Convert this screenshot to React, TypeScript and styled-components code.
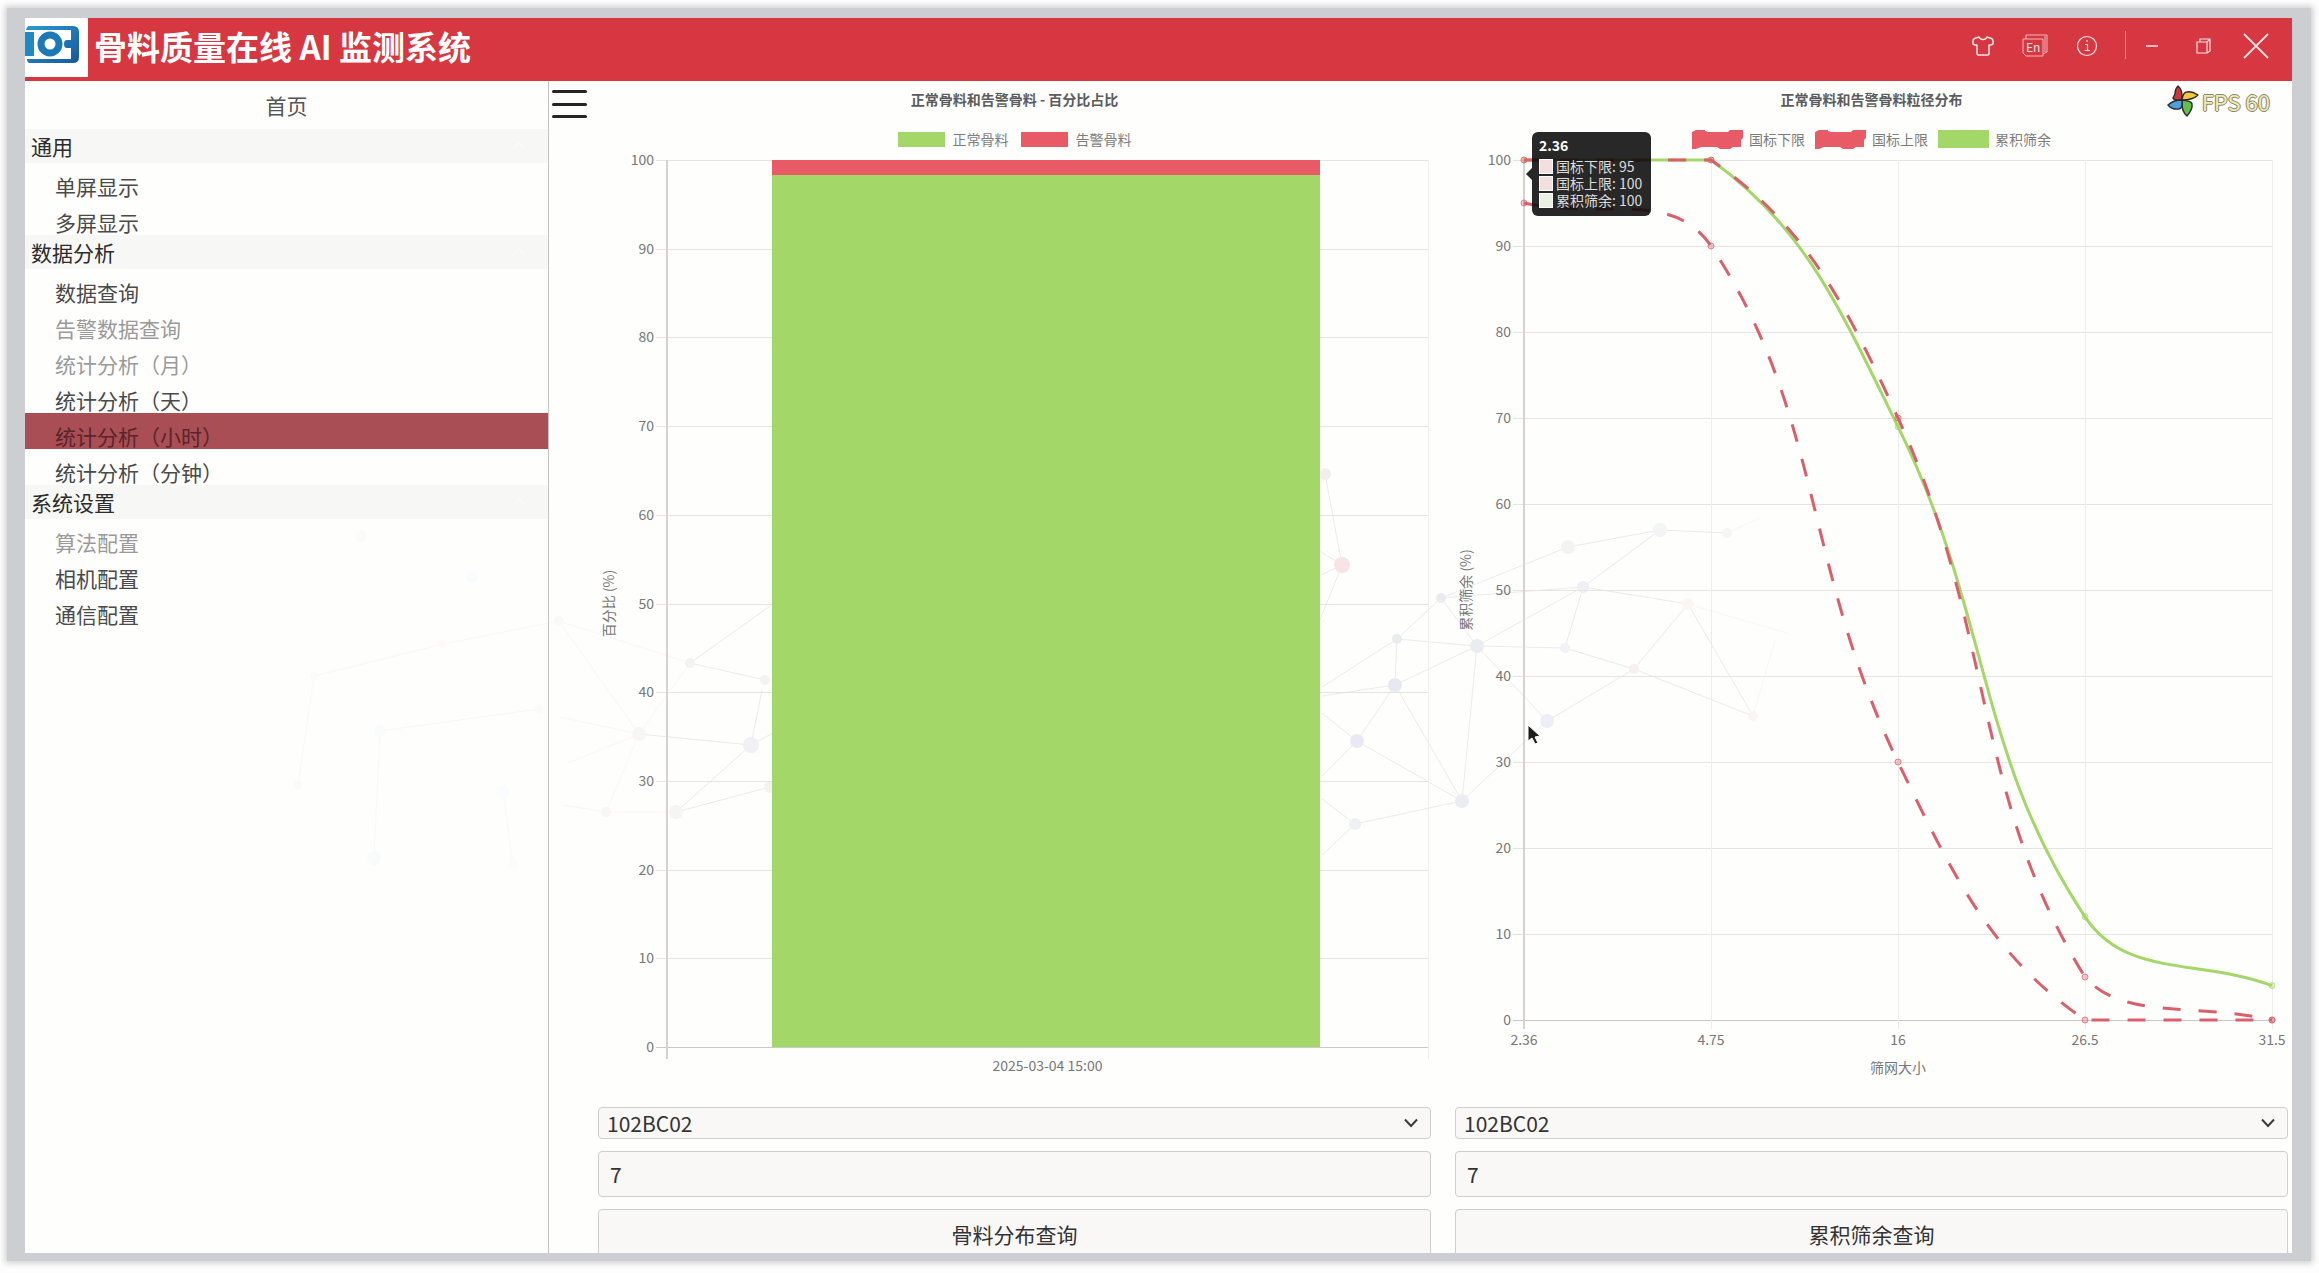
import React, { useLayoutEffect, useRef, useState } from "react";
import styled, { createGlobalStyle, css } from "styled-components";

const GlobalStyle = createGlobalStyle`
  *, *::before, *::after { box-sizing: border-box; }
  body {
    margin: 0;
    background: #fdfdfd;
    color: #333;
    font-family: "Noto Sans CJK SC", "Noto Sans", sans-serif;
  }
  button, input, select { font: inherit; color: inherit; }
`;

const RED = "#e85a66";
const GREEN = "#a3d768";

/* ---------- window frame ---------- */

const Page = styled.div`
  height: 100vh;
  padding: 8px 8px 12px 7px;
  overflow: hidden;
`;

const Bezel = styled.div`
  height: 100%;
  padding: 10px 19px 8px 18px;
  background: #cdced1;
  box-shadow: 0 0 6px 2px #cdced1;
`;

const AppWindow = styled.div`
  position: relative;
  display: flex;
  flex-direction: column;
  height: 100%;
  overflow: hidden;
  background: #fefefd;
`;

/* ---------- header ---------- */

const Header = styled.header`
  display: flex;
  align-items: center;
  flex: none;
  height: 63px;
  padding-right: 10px;
  background: #d63741;
  color: #fff;
`;

const LogoBox = styled.div`
  align-self: flex-start;
  width: 63px;
  height: 59px;
  background: #fff;
`;

const AppTitle = styled.h1`
  flex: 1;
  margin: 0;
  padding: 0 0 8px 6px;
  font-size: 33px;
  line-height: 40px;
  font-weight: 700;
`;

const WindowButtons = styled.div`
  display: flex;
  height: 63px;
  padding-bottom: 8px;
`;

const IconButton = styled.button`
  display: grid;
  place-items: center;
  width: 52px;
  padding: 0;
  border: 0;
  background: none;
  color: #fbe3e4;
`;

const Divider = styled.span`
  width: 1px;
  height: 28px;
  margin: 13px 0 0 12px;
  background: #eb9095;
`;

/* ---------- body ---------- */

const Body = styled.div`
  position: relative;
  display: flex;
  flex: 1;
  min-height: 0;
`;

const Backdrop = styled.svg`
  position: absolute;
  inset: 0;
  width: 100%;
  height: 100%;
  pointer-events: none;
`;

const Sidebar = styled.nav`
  position: relative;
  flex: none;
  width: 524px;
  border-right: 1px solid #c4c3c2;
  font-size: 21px;
`;

const HomeLink = styled.a`
  display: block;
  height: 48px;
  line-height: 48px;
  text-align: center;
  color: #555;
  text-decoration: none;
`;

const SectionButton = styled.button`
  display: flex;
  align-items: center;
  justify-content: space-between;
  width: 100%;
  height: 34px;
  padding: 0 22px 0 6px;
  border: 0;
  background: #f7f7f5;
  color: #2b2b2b;
`;

const MenuList = styled.ul`
  margin: 0;
  padding: 0;
  list-style: none;
`;

const MenuLink = styled.a<{ $state?: "off" | "active" }>`
  display: block;
  height: 36px;
  padding: 7px 0 0 30px;
  line-height: 32px;
  color: #4a4a4a;
  text-decoration: none;
  ${(p) => p.$state === "off" && css`color: #9a9a9a;`}
  ${(p) => p.$state === "active" && css`background: #a94e55; color: #5a2429;`}
`;

const ToggleColumn = styled.div`
  position: relative;
  flex: none;
  width: 49px;
  padding: 7px 0 0 2px;
`;

const MenuToggle = styled.button`
  display: grid;
  align-content: space-between;
  width: 36px;
  height: 30px;
  padding: 2px 0 0 1px;
  border: 0;
  background: none;
`;

const ToggleBar = styled.span`
  height: 3px;
  border-radius: 2px;
  background: #252525;
`;

const Columns = styled.main`
  position: relative;
  flex: 1;
  display: grid;
  grid-template-columns: repeat(2, minmax(0, 1fr));
  gap: 24px;
  min-width: 0;
  padding-right: 4px;
`;

const Column = styled.section`
  display: flex;
  flex-direction: column;
  gap: 12px;
  min-height: 0;
  margin-bottom: -5px;
`;

/* ---------- chart ---------- */

const Figure = styled.figure`
  position: relative;
  display: flex;
  flex-direction: column;
  flex: 1;
  min-height: 0;
  margin: 0;
  font-size: 14px;
`;

const ChartTitle = styled.figcaption`
  line-height: 36px;
  text-align: center;
  font-weight: 700;
  color: #5c5c5c;
`;

const Legend = styled.ul<{ $gap: number }>`
  display: flex;
  justify-content: center;
  gap: ${(p) => p.$gap}px;
  height: 24px;
  margin: 10px 0 1px;
  padding: 0;
  list-style: none;
  color: #7d7d7d;
`;

const LegendItem = styled.li<{ $gap: number }>`
  display: flex;
  align-items: center;
  gap: ${(p) => p.$gap}px;
  line-height: 22px;
`;

const Swatch = styled.span<{ $color: string; $wide?: boolean }>`
  width: ${(p) => (p.$wide ? 51 : 47)}px;
  height: ${(p) => (p.$wide ? 18 : 15)}px;
  background: ${(p) => p.$color};
`;

const PlotArea = styled.div`
  position: relative;
  flex: 1;
  min-height: 0;
`;

const PlotSvg = styled.svg`
  position: absolute;
  inset: 0;
  overflow: visible;
  font-size: 14px;
  fill: #777;
`;

const Tooltip = styled.div`
  position: absolute;
  top: -20px;
  left: 77px;
  width: 119px;
  height: 84px;
  padding: 3px 7px;
  border-radius: 6px;
  background: rgba(10, 10, 10, 0.88);
  color: #dcdcdc;
  &::before {
    content: "";
    position: absolute;
    left: -6px;
    top: 36px;
    border: solid transparent;
    border-width: 6px 6px 6px 0;
    border-right-color: rgba(10, 10, 10, 0.88);
  }
`;

const TooltipTitle = styled.strong`
  display: block;
  height: 23px;
  line-height: 20px;
  color: #fff;
`;

const TooltipRow = styled.div`
  display: flex;
  align-items: center;
  gap: 3px;
  height: 17px;
  line-height: 17px;
  white-space: nowrap;
`;

const TooltipSwatch = styled.span<{ $tint: string }>`
  width: 14px;
  height: 15px;
  border: 1px solid #fff;
  background: ${(p) => p.$tint};
`;

/* ---------- form ---------- */

const Controls = styled.form`
  display: grid;
  gap: 12px;
  flex: none;
  font-size: 21px;
  color: #333;
`;

const box = css`
  width: 100%;
  border: 1px solid #cfcfca;
  border-radius: 4px;
  background: #f9f8f6;
`;

const SelectWrap = styled.div`
  position: relative;
  height: 32px;
`;

const CameraSelect = styled.select`
  ${box}
  appearance: none;
  height: 32px;
  padding: 0 40px 0 8px;
  line-height: 30px;
`;

const SelectArrow = styled.svg`
  position: absolute;
  right: 13px;
  top: 11px;
  pointer-events: none;
`;

const NumberBox = styled.input`
  ${box}
  height: 46px;
  padding: 0 11px;
`;

const QueryButton = styled.button`
  ${box}
  height: 49px;
  padding: 0;
`;

/* ---------- overlays ---------- */

const Fps = styled.div`
  position: absolute;
  top: 4px;
  right: 22px;
  display: flex;
  align-items: center;
  gap: 3px;
`;

const FpsText = styled.span`
  font-size: 22px;
  line-height: 32px;
  color: #efe8ba;
  text-shadow: 1px 0 #8b8762, -1px 0 #8b8762, 0 1px #8b8762, 0 -1px #8b8762;
`;

const Pointer = styled.svg`
  position: absolute;
  left: 1502px;
  top: 706px;
`;

/* ---------- helpers ---------- */

function useSize() {
  const ref = useRef<HTMLDivElement>(null);
  const [size, setSize] = useState({ w: 0, h: 0 });
  useLayoutEffect(() => {
    const el = ref.current;
    if (!el) return;
    const read = () => setSize({ w: el.clientWidth, h: el.clientHeight });
    read();
    const observer = new ResizeObserver(read);
    observer.observe(el);
    return () => observer.disconnect();
  }, []);
  return { ref, ...size };
}

type Pt = { x: number; y: number };

/* Cardinal spline whose control points are kept inside the plot. */
function splinePath(pts: Pt[], tension: number, top: number, bottom: number) {
  const clamp = (v: number) => Math.max(top, Math.min(bottom, v));
  const ctrl = pts.map((p, i) => {
    const prev = pts[Math.max(0, i - 1)];
    const next = pts[Math.min(pts.length - 1, i + 1)];
    const d01 = Math.hypot(p.x - prev.x, p.y - prev.y);
    const d12 = Math.hypot(next.x - p.x, next.y - p.y);
    const sum = d01 + d12 || 1;
    const fa = (tension * d01) / sum;
    const fb = (tension * d12) / sum;
    return {
      before: { x: p.x - fa * (next.x - prev.x), y: clamp(p.y - fa * (next.y - prev.y)) },
      after: { x: p.x + fb * (next.x - prev.x), y: clamp(p.y + fb * (next.y - prev.y)) },
    };
  });
  return pts
    .map((p, i) => {
      if (i === 0) return `M${p.x} ${p.y}`;
      const a = ctrl[i - 1].after;
      const b = ctrl[i].before;
      return `C${a.x} ${a.y} ${b.x} ${b.y} ${p.x} ${p.y}`;
    })
    .join("");
}

const TICKS = [0, 10, 20, 30, 40, 50, 60, 70, 80, 90, 100];
const PLOT_TOP = 8;
const PLOT_LEFT = 69;

type AxesProps = { right: number; bottom: number; title: string; tail: number; columns: number };

function Axes({ right, bottom, title, tail, columns }: AxesProps) {
  const y = (v: number) => Math.round(bottom - ((bottom - PLOT_TOP) * v) / 100) + 0.5;
  const mid = (PLOT_TOP + bottom) / 2;
  return (
    <g>
      {TICKS.map((t) => (
        <g key={t}>
          <line x1={PLOT_LEFT - 11} x2={right} y1={y(t)} y2={y(t)} stroke={t ? "#e6e4e0" : "#cbc9c6"} />
          <text x={PLOT_LEFT - 13} y={y(t) + 4} textAnchor="end">{t}</text>
        </g>
      ))}
      {Array.from({ length: columns }, (_, i) => {
        const x = Math.round(PLOT_LEFT + ((right - PLOT_LEFT) * (i + 1)) / columns) + 0.5;
        return <line key={i} x1={x} x2={x} y1={PLOT_TOP} y2={bottom + tail} stroke="#eeedeb" />;
      })}
      <line x1={PLOT_LEFT} x2={PLOT_LEFT} y1={PLOT_TOP} y2={bottom + tail} stroke="#d6d2ce" strokeWidth="2" />
      <text transform={`translate(16 ${mid}) rotate(-90)`} textAnchor="middle">{title}</text>
    </g>
  );
}

function BarChart() {
  const { ref, w, h } = useSize();
  const right = w - 3;
  const bottom = h - 48;
  const span = right - PLOT_LEFT;
  const full = bottom - PLOT_TOP;
  const barX = PLOT_LEFT + Math.floor(span * 0.139);
  const barW = Math.round(span * 0.72);
  const warn = Math.round(full * 0.017);
  return (
    <Figure>
      <ChartTitle>正常骨料和告警骨料 - 百分比占比</ChartTitle>
      <Legend $gap={12}>
        <LegendItem $gap={8}><Swatch $color={GREEN} />正常骨料</LegendItem>
        <LegendItem $gap={8}><Swatch $color={RED} />告警骨料</LegendItem>
      </Legend>
      <PlotArea ref={ref}>
        {w > 0 && (
          <PlotSvg width={w} height={h}>
            <Axes right={right} bottom={bottom} title="百分比 (%)" tail={12} columns={1} />
            <rect x={barX} y={PLOT_TOP} width={barW} height={warn} fill={RED} />
            <rect x={barX} y={PLOT_TOP + warn} width={barW} height={full - warn} fill={GREEN} />
            <text x={PLOT_LEFT + span / 2} y={bottom + 24} textAnchor="middle">2025-03-04 15:00</text>
          </PlotSvg>
        )}
      </PlotArea>
    </Figure>
  );
}

const SIEVES = ["2.36", "4.75", "16", "26.5", "31.5"];
const SERIES = [
  { name: "累积筛余", color: GREEN, dash: undefined, values: [100, 100, 69, 12, 4] },
  { name: "国标上限", color: "#db5f6b", dash: "18 18", values: [100, 100, 70, 5, 0] },
  { name: "国标下限", color: "#db5f6b", dash: "18 18", values: [95, 90, 30, 0, 0] },
];

function BrushSwatch() {
  return (
    <svg width="51" height="20" viewBox="0 0 51 20" aria-hidden="true">
      <path d="M0 3 4 1H13V2L16 3H36L38 1H51V9L49 11V18H41L38 20H28L25 18H9L4 20H0Z" fill={RED} />
    </svg>
  );
}

function LineChart() {
  const { ref, w, h } = useSize();
  const right = w - 16;
  const bottom = h - 75;
  const step = (right - PLOT_LEFT) / 4;
  const y = (v: number) => bottom - ((bottom - PLOT_TOP) * v) / 100;
  return (
    <Figure>
      <ChartTitle>正常骨料和告警骨料粒径分布</ChartTitle>
      <Legend $gap={10}>
        <LegendItem $gap={6}><BrushSwatch />国标下限</LegendItem>
        <LegendItem $gap={6}><BrushSwatch />国标上限</LegendItem>
        <LegendItem $gap={6}><Swatch $color={GREEN} $wide />累积筛余</LegendItem>
      </Legend>
      <PlotArea ref={ref}>
        {w > 0 && (
          <PlotSvg width={w} height={h}>
            <Axes right={right} bottom={bottom} title="累积筛余 (%)" tail={9} columns={4} />
            {SERIES.map((s) => {
              const pts = s.values.map((v, i) => ({ x: PLOT_LEFT + step * i, y: y(v) }));
              return (
                <g key={s.name} stroke={s.color} fill="none">
                  <path d={splinePath(pts, 0.4, PLOT_TOP, bottom)} strokeWidth="3" strokeDasharray={s.dash} />
                  {pts.map((p, i) => (
                    <circle key={i} cx={p.x} cy={p.y} r="3" fill={s.color} fillOpacity="0.35" strokeOpacity="0.7" />
                  ))}
                </g>
              );
            })}
            {SIEVES.map((s, i) => (
              <text key={s} x={PLOT_LEFT + step * i} y={bottom + 25} textAnchor="middle">{s}</text>
            ))}
            <text x={(PLOT_LEFT + right) / 2} y={bottom + 53} textAnchor="middle">筛网大小</text>
          </PlotSvg>
        )}
        <Tooltip role="tooltip">
          <TooltipTitle>2.36</TooltipTitle>
          <TooltipRow><TooltipSwatch $tint="#f3dfe0" />国标下限: 95</TooltipRow>
          <TooltipRow><TooltipSwatch $tint="#f3dfe0" />国标上限: 100</TooltipRow>
          <TooltipRow><TooltipSwatch $tint="#eaf1e2" />累积筛余: 100</TooltipRow>
        </Tooltip>
      </PlotArea>
    </Figure>
  );
}

function QueryForm({ id, action }: { id: string; action: string }) {
  return (
    <Controls onSubmit={(e) => e.preventDefault()}>
      <SelectWrap>
        <CameraSelect id={`${id}-camera`} aria-label="相机" defaultValue="102BC02">
          <option>102BC02</option>
        </CameraSelect>
        <SelectArrow width="14" height="10" viewBox="0 0 14 10" fill="none" stroke="#3c3c3c" strokeWidth="2">
          <path d="M1 1.5 7 8 13 1.5" />
        </SelectArrow>
      </SelectWrap>
      <NumberBox id={`${id}-count`} aria-label="数量" defaultValue="7" />
      <QueryButton type="submit">{action}</QueryButton>
    </Controls>
  );
}

/* ---------- decorative network ---------- */

type Edge = [number, number, number, number];
const EDGES: Edge[] = [
  [1325, 474, 1342, 565], [1342, 565, 1310, 545], [1342, 565, 1310, 580], [1342, 565, 1318, 625],
  [1441, 598, 1397, 639], [1441, 598, 1477, 646], [1441, 598, 1568, 547], [1441, 598, 1583, 587],
  [1397, 639, 1395, 685], [1397, 639, 1477, 646], [1397, 639, 1322, 687], [1395, 685, 1322, 696],
  [1395, 685, 1357, 741], [1395, 685, 1462, 801], [1395, 685, 1477, 646], [1357, 741, 1322, 713],
  [1357, 741, 1322, 776], [1357, 741, 1462, 801], [1462, 801, 1477, 646], [1462, 801, 1355, 824],
  [1462, 801, 1547, 721], [1355, 824, 1322, 799], [1355, 824, 1322, 855], [1477, 646, 1583, 587],
  [1477, 646, 1565, 648], [1477, 646, 1547, 721], [1568, 547, 1660, 530], [1660, 530, 1583, 587],
  [1660, 530, 1727, 533], [1583, 587, 1565, 648], [1583, 587, 1688, 604], [1565, 648, 1634, 669],
  [1634, 669, 1688, 604], [1634, 669, 1547, 721], [1634, 669, 1753, 716], [1688, 604, 1753, 716],
  [690, 663, 765, 680], [690, 663, 773, 604], [751, 745, 762, 690], [751, 745, 676, 812],
  [676, 812, 770, 787], [639, 734, 751, 745], [751, 745, 775, 732],
];
const FAINT_EDGES: Edge[] = [
  [1688, 604, 1790, 634], [1727, 533, 1760, 518], [1753, 716, 1775, 640],
  [559, 621, 690, 663], [559, 621, 639, 734], [690, 663, 639, 734], [639, 734, 606, 812],
  [639, 734, 560, 717], [639, 734, 568, 763], [606, 812, 676, 812], [563, 805, 606, 812],
  [314, 676, 443, 644], [443, 644, 559, 621], [314, 676, 298, 785], [380, 731, 374, 858],
  [380, 731, 539, 709], [503, 792, 513, 865],
];
const NODES: [number, number, number, string][] = [
  [1325, 474, 6, "#f0efed"], [1342, 565, 8, "#f6e4e6"], [1441, 598, 5, "#e9ebef"], [1397, 639, 5, "#e9ebef"],
  [1395, 685, 7, "#e7e9f0"], [1357, 741, 7, "#e9e9f3"], [1462, 801, 7, "#ebedf3"], [1355, 824, 6, "#eef0f2"],
  [1477, 646, 7, "#e9edf1"], [1568, 547, 7, "#f5f3f2"], [1660, 530, 7, "#f2f4f6"], [1727, 533, 5, "#f6f6f5"],
  [1583, 587, 6, "#efeff4"], [1565, 648, 5, "#f1f2f5"], [1634, 669, 5, "#f8eff0"], [1688, 604, 6, "#f8f7f4"],
  [1547, 721, 7, "#eceff7"], [1753, 716, 5, "#faf5f4"], [690, 663, 5, "#f5f3f2"], [765, 680, 5, "#f3f3f2"],
  [751, 745, 8, "#f0f0f5"], [639, 734, 7, "#f8f5f5"], [606, 812, 5, "#f8f6f6"], [676, 812, 7, "#f6f5f3"],
  [770, 787, 6, "#f3f3f2"], [559, 621, 5, "#faf9f9"], [361, 536, 6, "#fbfbfb"], [472, 577, 6, "#f9fcfd"],
  [314, 676, 4, "#fbfbfb"], [443, 644, 4, "#fcfaf9"], [380, 731, 6, "#f9fcfd"], [298, 785, 4, "#fcf9f9"],
  [539, 709, 5, "#fcfbfb"], [503, 792, 7, "#fafcfd"], [374, 858, 7, "#f9fbfb"], [513, 865, 5, "#f9fdfe"],
];

function Network() {
  return (
    <Backdrop aria-hidden="true">
      <g transform="translate(-25 -81)">
        {EDGES.map((e, i) => <line key={i} x1={e[0]} y1={e[1]} x2={e[2]} y2={e[3]} stroke="#ebebec" />)}
        {FAINT_EDGES.map((e, i) => <line key={i} x1={e[0]} y1={e[1]} x2={e[2]} y2={e[3]} stroke="#faf8f6" />)}
        {NODES.map((n, i) => <circle key={i} cx={n[0]} cy={n[1]} r={n[2]} fill={n[3]} />)}
      </g>
    </Backdrop>
  );
}

/* ---------- icons ---------- */

const Logo = () => (
  <svg width="63" height="59" viewBox="0 0 63 59" aria-label="logo">
    <defs>
      <linearGradient id="logoBlue" x1="0" y1="0" x2="1" y2="1">
        <stop offset="0" stopColor="#2b9bd3" />
        <stop offset="1" stopColor="#16569c" />
      </linearGradient>
    </defs>
    <path fill="url(#logoBlue)" d="M4 8H48Q54 8 54 14V39Q54 45 48 45H5Q2 45 2 41H46V30H42Q39 30 39 26Q39 22 42 22H46V12H1Q2 8 4 8Z" />
    <path fill="#2089c4" d="M0 14H9V38H0Z" />
    <circle cx="25" cy="26" r="9" fill="none" stroke="#1b79b8" strokeWidth="7" />
  </svg>
);

const ShirtIcon = () => (
  <svg width="22" height="20" viewBox="0 0 22 20" fill="none" stroke="currentColor" strokeWidth="1.6" strokeLinejoin="round">
    <path d="M7 1 2.5 2.5Q1 3.2 1 5V8L3 9H5V17.5Q5 19 6.5 19H15.5Q17 19 17 17.5V9H19L21 8V5Q21 3.2 19.5 2.5L15 1Q14 3.5 11 3.5T7 1Z" />
  </svg>
);

const LanguageIcon = () => (
  <svg width="26" height="24" viewBox="0 0 26 24" fill="none" stroke="currentColor" strokeOpacity="0.75">
    <path d="M1 5H21V22H4L1 19ZM4 5V1H25V18L21 20M23 2V18" />
    <text x="4" y="18" fontSize="12" fill="currentColor" stroke="none">En</text>
  </svg>
);

const InfoIcon = () => (
  <svg width="22" height="22" viewBox="0 0 22 22" fill="none" stroke="currentColor" strokeWidth="1.2">
    <circle cx="11" cy="11" r="9.5" />
    <path d="M9 9.5H11.5V15.5M8.5 15.5H14M11 5V7" />
  </svg>
);

const MinimizeIcon = () => (
  <svg width="14" height="4" viewBox="0 0 14 4" stroke="currentColor" strokeWidth="1.5"><path d="M1 2H13" /></svg>
);

const RestoreIcon = () => (
  <svg width="16" height="16" viewBox="0 0 16 16" fill="none" stroke="currentColor" strokeWidth="1.2">
    <path d="M1 4H11V15H1ZM4 4V1H14V13L11 15M11 4 14 1" />
  </svg>
);

const CloseIcon = () => (
  <svg width="26" height="26" viewBox="0 0 26 26" stroke="currentColor" strokeWidth="1.8"><path d="M1 1 25 25M25 1 1 25" /></svg>
);

const Pinwheel = () => (
  <svg width="32" height="32" viewBox="0 0 32 32" stroke="#2a2a2a" strokeWidth="1.4" strokeLinejoin="round" aria-hidden="true">
    <path d="M15 15Q7 16 6 13Q7 11 8 9Q8 4 11 1Q16 5 15 15Z" fill="#c9363c" />
    <path d="M15 15Q16 7 20 7Q25 6 31 10Q26 15 15 15Z" fill="#f0c63c" />
    <path d="M15 15Q25 16 25 19Q26 24 20 31Q14 26 15 15Z" fill="#63bf4a" />
    <path d="M15 15Q16 23 12 24Q5 25 1 20Q6 15 15 15Z" fill="#4d9fe0" />
  </svg>
);

/* ---------- menu ---------- */

type Item = { label: string; state?: "off" | "active" };
const MENU: { title: string; items: Item[] }[] = [
  { title: "通用", items: [{ label: "单屏显示" }, { label: "多屏显示" }] },
  {
    title: "数据分析",
    items: [
      { label: "数据查询" },
      { label: "告警数据查询", state: "off" },
      { label: "统计分析（月）", state: "off" },
      { label: "统计分析（天）" },
      { label: "统计分析（小时）", state: "active" },
      { label: "统计分析（分钟）" },
    ],
  },
  { title: "系统设置", items: [{ label: "算法配置", state: "off" }, { label: "相机配置" }, { label: "通信配置" }] },
];

export default function App() {
  return (
    <Page>
      <GlobalStyle />
      <Bezel>
        <AppWindow>
          <Header>
            <LogoBox><Logo /></LogoBox>
            <AppTitle>骨料质量在线 AI 监测系统</AppTitle>
            <WindowButtons>
              <IconButton aria-label="主题"><ShirtIcon /></IconButton>
              <IconButton aria-label="语言"><LanguageIcon /></IconButton>
              <IconButton aria-label="关于"><InfoIcon /></IconButton>
              <Divider />
              <IconButton aria-label="最小化"><MinimizeIcon /></IconButton>
              <IconButton aria-label="还原"><RestoreIcon /></IconButton>
              <IconButton aria-label="关闭"><CloseIcon /></IconButton>
            </WindowButtons>
          </Header>
          <Body>
            <Network />
            <Sidebar>
              <HomeLink href="#home">首页</HomeLink>
              {MENU.map((section) => (
                <React.Fragment key={section.title}>
                  <SectionButton>
                    {section.title}
                    <svg width="14" height="8" viewBox="0 0 14 8" fill="none" stroke="#fcfcfb" strokeWidth="1">
                      <path d="M1 7 7 1 13 7" />
                    </svg>
                  </SectionButton>
                  <MenuList>
                    {section.items.map((item) => (
                      <li key={item.label}>
                        <MenuLink href="#" $state={item.state}>{item.label}</MenuLink>
                      </li>
                    ))}
                  </MenuList>
                </React.Fragment>
              ))}
            </Sidebar>
            <ToggleColumn>
              <MenuToggle aria-label="菜单"><ToggleBar /><ToggleBar /><ToggleBar /></MenuToggle>
            </ToggleColumn>
            <Columns>
              <Column>
                <BarChart />
                <QueryForm id="share" action="骨料分布查询" />
              </Column>
              <Column>
                <LineChart />
                <QueryForm id="sieve" action="累积筛余查询" />
              </Column>
            </Columns>
            <Fps><Pinwheel /><FpsText>FPS 60</FpsText></Fps>
          </Body>
          <Pointer width="16" height="22" viewBox="0 0 16 22" aria-hidden="true">
            <path d="M1 1V17L5 14L8 20L11 19L8 13L13 12Z" fill="#1d1d1d" stroke="#fff" strokeWidth="1" />
          </Pointer>
        </AppWindow>
      </Bezel>
    </Page>
  );
}
